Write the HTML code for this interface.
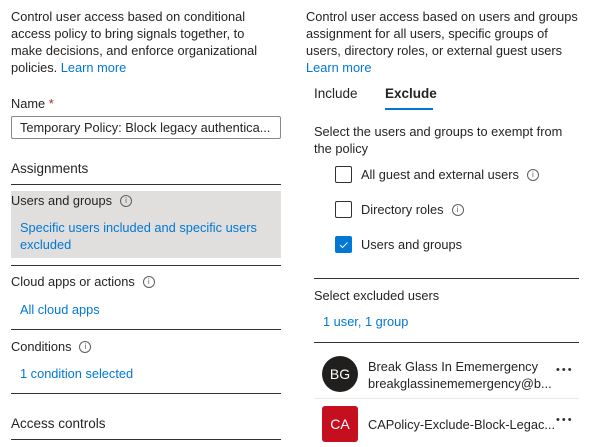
<!DOCTYPE html>
<html><head><style>
body{margin:0;width:603px;height:447px;background:#fff;position:relative;overflow:hidden;font-family:"Liberation Sans",sans-serif;font-size:12.8px;color:#252423}
.t{position:absolute;white-space:nowrap;line-height:17px}
.b{color:#0078d4}
.hl{position:absolute;height:1px;background:#323130}
.i{display:inline-block;width:10px;height:10px;border:1px solid #605e5c;border-radius:50%;font-size:8px;line-height:10px;text-align:center;color:#605e5c;vertical-align:middle;margin-left:8px;position:relative;top:-1px}
.cb{position:absolute;width:17px;height:17px;border:1px solid #323130;border-radius:2px;box-sizing:border-box}
.dots{position:absolute;font-size:11px;letter-spacing:2px;color:#323130}
</style></head><body>
<div class="t" style="left:11px;top:8px">Control user access based on conditional</div>
<div class="t" style="left:11px;top:25px">access policy to bring signals together, to</div>
<div class="t" style="left:11px;top:42px">make decisions, and enforce organizational</div>
<div class="t" style="left:11px;top:59px">policies. <span class="b">Learn more</span></div>
<div class="t" style="left:11px;top:95px">Name <span style="color:#a4262c">*</span></div>
<div style="position:absolute;left:11px;top:116px;width:270px;height:23px;border:1px solid #8a8886;box-sizing:border-box;border-radius:2px"></div>
<div class="t" style="left:20px;top:119px">Temporary Policy: Block legacy authentica...</div>
<div class="t" style="left:11px;top:160px;font-size:13.5px">Assignments</div>
<div class="hl" style="left:11px;top:184px;width:270px"></div>
<div style="position:absolute;left:11px;top:191px;width:270px;height:67px;background:#e1dfdd"></div>
<div class="t" style="left:11px;top:192px">Users and groups<span class="i">i</span></div>
<div class="t b" style="left:20px;top:219px">Specific users included and specific users</div>
<div class="t b" style="left:20px;top:236px">excluded</div>
<div class="hl" style="left:11px;top:265px;width:270px"></div>
<div class="t" style="left:11px;top:273px">Cloud apps or actions<span class="i">i</span></div>
<div class="t b" style="left:20px;top:301px">All cloud apps</div>
<div class="hl" style="left:11px;top:329px;width:270px"></div>
<div class="t" style="left:11px;top:338px">Conditions<span class="i">i</span></div>
<div class="t b" style="left:20px;top:365px">1 condition selected</div>
<div class="hl" style="left:11px;top:393px;width:270px"></div>
<div class="t" style="left:11px;top:415px;font-size:13.5px">Access controls</div>
<div class="hl" style="left:11px;top:439px;width:270px"></div>

<div class="t" style="left:306px;top:8px">Control user access based on users and groups</div>
<div class="t" style="left:306px;top:25px">assignment for all users, specific groups of</div>
<div class="t" style="left:306px;top:42px">users, directory roles, or external guest users</div>
<div class="t b" style="left:306px;top:59px">Learn more</div>
<div class="t" style="left:314px;top:85px;font-size:13.5px">Include</div>
<div class="t" style="left:385px;top:85px;font-size:13.5px;font-weight:bold">Exclude</div>
<div style="position:absolute;left:385px;top:108px;width:48px;height:2px;background:#0078d4"></div>
<div class="t" style="left:314px;top:123px">Select the users and groups to exempt from</div>
<div class="t" style="left:314px;top:140px">the policy</div>
<div class="cb" style="left:335px;top:166px"></div>
<div class="t" style="left:361px;top:166px">All guest and external users<span class="i">i</span></div>
<div class="cb" style="left:335px;top:201px"></div>
<div class="t" style="left:361px;top:201px">Directory roles<span class="i">i</span></div>
<div class="cb" style="left:335px;top:236px;background:#0078d4;border-color:#0078d4"><svg width="17" height="17" style="position:absolute;left:-1px;top:-1px"><path d="M5 9l2.5 2.5 5-5" stroke="#fff" stroke-width="1" fill="none"/></svg></div>
<div class="t" style="left:361px;top:236px">Users and groups</div>
<div class="hl" style="left:314px;top:278px;width:265px"></div>
<div class="t" style="left:314px;top:287px">Select excluded users</div>
<div class="t b" style="left:323px;top:313px">1 user, 1 group</div>
<div class="hl" style="left:314px;top:342px;width:265px"></div>
<div style="position:absolute;left:322px;top:356px;width:36px;height:36px;border-radius:50%;background:#201f1e;color:#fff;font-size:14px;line-height:36px;text-align:center">BG</div>
<div class="t" style="left:368px;top:358px">Break Glass In Ememergency</div>
<div class="t" style="left:368px;top:375px">breakglassinememergency@b...</div>
<div class="dots" style="left:556px;top:364px">•••</div>
<div style="position:absolute;left:314px;top:398px;width:265px;height:1px;background:#edebe9"></div>
<div style="position:absolute;left:322px;top:406px;width:36px;height:36px;border-radius:3px;background:#c50f1f;color:#fff;font-size:14px;line-height:36px;text-align:center">CA</div>
<div class="t" style="left:368px;top:416px">CAPolicy-Exclude-Block-Legac...</div>
<div class="dots" style="left:556px;top:414px">•••</div>
</body></html>
